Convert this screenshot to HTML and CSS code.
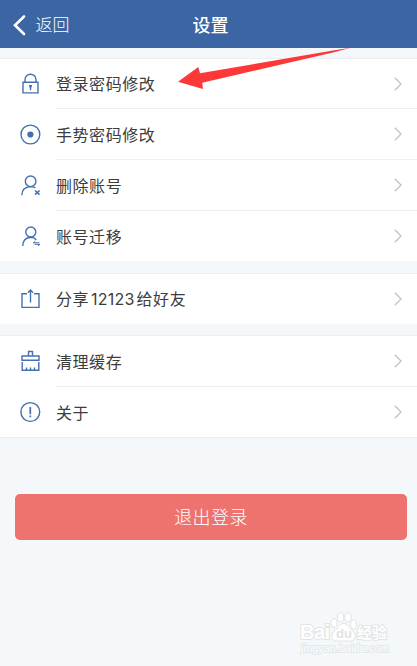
FILE: index.html
```html
<!DOCTYPE html>
<html lang="zh-CN">
<head>
    <meta charset="UTF-8">
    <meta name="viewport" content="width=device-width, initial-scale=1.0">
    <title>设置</title>
    <link rel="stylesheet" href="styles.css">
</head>
<body>
    <header class="navbar">
        <a class="back">
            <svg width="14" height="22" viewBox="0 0 14 22"><path d="M12 2.500 3 11.200l9 8.800"/></svg>
            <span>返回</span>
        </a>
        <h1>设置</h1>
    </header>

    <main>
        <ul class="group">
            <li class="row">
                <svg class="icon" viewBox="0 0 24 24"><path d="M5 10.200h15v10.700H5zM7 10.200V7.700a5.500 5.500 0 0 1 11 0v2.500"/><path class="solid" d="M11.100 13h2.800v2.300h-.7v3h-1.400v-3h-.7z"/></svg>
                <div class="cell"><span>登录密码修改</span><svg class="arrow" viewBox="0 0 8 14"><path d="m.8.800 6.200 6.200-6.200 6.200"/></svg></div>
            </li>
            <li class="row">
                <svg class="icon" viewBox="0 0 24 24"><circle cx="12.400" cy="12.500" r="9.400"/><circle class="solid" cx="12.400" cy="12.500" r="3.100"/></svg>
                <div class="cell"><span>手势密码修改</span><svg class="arrow" viewBox="0 0 8 14"><path d="m.8.800 6.200 6.200-6.200 6.200"/></svg></div>
            </li>
            <li class="row">
                <svg class="icon" viewBox="0 0 24 24"><circle cx="12.600" cy="8.300" r="5.300"/><path d="M3.800 22.300c0-5 3-8.400 8.800-8.700 2 0 3.500.400 4.800 1.300"/><path class="mark" d="m17 17.500 4.600 4.200m0-4.200L17 21.700"/></svg>
                <div class="cell"><span>删除账号</span><svg class="arrow" viewBox="0 0 8 14"><path d="m.8.800 6.200 6.200-6.200 6.200"/></svg></div>
            </li>
            <li class="row">
                <svg class="icon" viewBox="0 0 24 24"><circle cx="12.800" cy="8" r="5"/><path d="M4.800 21.900c0-5 3-8.200 8-8.600 2.200 0 4 .700 5.500 2.400"/><path class="thin" d="M15.300 18.800h6m-6 0 2-1.600M16.500 20.300h5.500l-2 1.700"/></svg>
                <div class="cell"><span>账号迁移</span><svg class="arrow" viewBox="0 0 8 14"><path d="m.8.800 6.200 6.200-6.200 6.200"/></svg></div>
            </li>
        </ul>

        <ul class="group">
            <li class="row">
                <svg class="icon" viewBox="0 0 24 24"><path d="M9 6.700H4v13.700h17V6.700h-5M12.500 15.600V3.300M9.900 5.700l2.600-2.600 2.600 2.600"/></svg>
                <div class="cell"><span>分享<span class="num">12123</span>给好友</span><svg class="arrow" viewBox="0 0 8 14"><path d="m.8.800 6.200 6.200-6.200 6.200"/></svg></div>
            </li>
        </ul>

        <ul class="group">
            <li class="row">
                <svg class="icon" viewBox="0 0 24 24"><path d="M10.500 7V2.500h4V7M4 7h17v4.200H4zM4.200 13v8.200h16.600V13M8.500 21.200v-2.700M12.500 21.200v-2.700M16.500 21.200v-2.700"/></svg>
                <div class="cell"><span>清理缓存</span><svg class="arrow" viewBox="0 0 8 14"><path d="m.8.800 6.200 6.200-6.200 6.200"/></svg></div>
            </li>
            <li class="row">
                <svg class="icon" viewBox="0 0 24 24"><circle cx="12.300" cy="12" r="9.400"/><path class="bold" d="M12.300 7v7.200M12.300 15.600v1.600"/></svg>
                <div class="cell"><span>关于</span><svg class="arrow" viewBox="0 0 8 14"><path d="m.8.800 6.200 6.200-6.200 6.200"/></svg></div>
            </li>
        </ul>

        <button class="logout">退出登录</button>
    </main>

    <!-- red pointer over the first row -->
    <svg class="pointer" width="176" height="44" viewBox="0 0 176 44"><path d="M0 34.700 20.300 20 22 26.200 155 3.500 173 .8 155 5.500 24.200 35.800 25 42z"/></svg>

    <div class="watermark">
        <svg width="96" height="46" viewBox="0 0 96 46">
            <text class="brand" x="2" y="30">Bai</text>
            <ellipse cx="36" cy="14" rx="3" ry="4.300"/>
            <ellipse cx="42.500" cy="8" rx="3.200" ry="4.500"/>
            <ellipse cx="50" cy="8.500" rx="3.200" ry="4.500"/>
            <ellipse cx="55.500" cy="15.500" rx="2.900" ry="4.200"/>
            <path d="M45.500 14.500c5 0 5.500 5 9.500 7.700 4.500 4 2.200 9.800-2.500 9.800H38.500c-5.500 0-6.500-6-2.500-9.500 4-2.800 4.500-8 9.500-8z"/>
            <text class="du" x="38" y="29">du</text>
            <text class="cn" x="59" y="29">经验</text>
            <text class="url" x="3" y="43">jingyan.baidu.com</text>
        </svg>
    </div>
</body>
</html>
```
FILE: styles.css
```css
:root {
    --blue: #3b65a3;
    --icon: #4470b0;
    --bg: #f4f8fa;
    --line: #eceef0;
    --text: #3c3c3c;
}
* {
    box-sizing: border-box;
}
body {
    margin: 0;
    height: 666px;
    overflow: hidden;
    position: relative;
    background: var(--bg);
    color: var(--text);
    font-family: "Noto Sans CJK SC", sans-serif;
}
.navbar {
    display: grid;
    grid-template-columns: 1fr auto 1fr;
    align-items: center;
    height: 48px;
    padding: 0 0 1px 12px;
    background: var(--blue);
    color: #fff;
}
.navbar h1 {
    margin: 0 8px 0 0;
    font-size: 18px;
    line-height: 26px;
    font-weight: 500;
}
.back {
    display: flex;
    align-items: center;
    gap: 9.5px;
    font-size: 17px;
    line-height: 24px;
    font-weight: 300;
}
.back svg {
    margin-top: 3px;
    fill: none;
    stroke: #fff;
    stroke-width: 2.6;
    stroke-linecap: round;
}
.group {
    margin: 10px 0 0;
    padding: 0;
    list-style: none;
    background: #fff;
    border-top: 1px solid var(--line);
}
.group + .group {
    margin-top: 12px;
}
.group:last-of-type {
    margin-top: 11px;
    border-bottom: 1px solid var(--line);
}
.row {
    display: flex;
    height: 51px;
    padding-left: 18px;
}
.group:first-child .row:first-child,
.row:last-child {
    height: 50px;
}
.icon {
    flex: none;
    width: 24px;
    height: 24px;
    margin: 13px 14px 0 0;
    fill: none;
    stroke: var(--icon);
    stroke-width: 1.4;
}
.icon .solid {
    fill: var(--icon);
    stroke: none;
}
.icon .mark {
    stroke-width: 1.6;
}
.icon .thin {
    stroke-width: 1;
}
.icon .bold {
    stroke-width: 1.7;
}
.cell {
    flex: 1;
    display: flex;
    justify-content: space-between;
    align-items: center;
    padding-right: 15px;
    border-bottom: 1px solid var(--line);
    font-size: 16px;
    line-height: 24px;
    letter-spacing: 0.55px;
}
.cell > span {
    padding-bottom: 1px;
}
.row:last-child .cell {
    border-bottom: 0;
}
.num {
    margin: 0 2px;
    font-family: Inter, sans-serif;
    letter-spacing: 0.2px;
}
.arrow {
    width: 8px;
    height: 14px;
    fill: none;
    stroke: #c5c5c8;
    stroke-width: 1.4;
}
.logout {
    display: block;
    width: 392px;
    height: 46px;
    margin: 55.5px 0 0 15px;
    padding: 0 0 2px;
    border: 0;
    border-radius: 5px;
    background: #ee726e;
    color: #fff;
    font: 300 18px "Noto Sans CJK SC", sans-serif;
    letter-spacing: 0.4px;
}
.pointer {
    position: absolute;
    left: 178px;
    top: 47px;
    fill: #fd3838;
}
.watermark {
    position: absolute;
    left: 298px;
    top: 609px;
}
.watermark svg {
    display: block;
    fill: #fff;
    stroke: #e0e4e6;
    stroke-width: 1;
}
.watermark text {
    font-family: "Liberation Sans", "Noto Sans CJK SC", sans-serif;
    font-weight: bold;
    paint-order: stroke;
    stroke-width: 1.8;
}
.watermark .brand {
    font-size: 20px;
    letter-spacing: -0.5px;
}
.watermark .du {
    font-size: 13px;
    fill: #dfe3e5;
    stroke: none;
}
.watermark .cn {
    font-size: 15px;
}
.watermark .url {
    font-size: 11px;
    font-weight: normal;
    stroke: #e3e7e9;
    stroke-width: 1.8;
}
```
